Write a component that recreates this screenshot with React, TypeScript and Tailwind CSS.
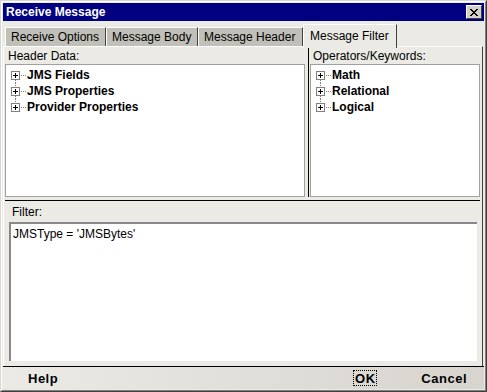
import React from "react";

const F = "font-['Liberation_Sans',Arial,sans-serif]";

function TreeRow({ label, first, last }: { label: string; first: boolean; last: boolean }) {
  return (
    <div className="flex items-center h-[16px]">
      <svg width="16" height="16" viewBox="0 0 16 16" className="shrink-0" shapeRendering="crispEdges">
        {!first && <line x1="4.5" y1="0" x2="4.5" y2="4" stroke="#808080" strokeDasharray="1 1" />}
        {!last && <line x1="4.5" y1="13" x2="4.5" y2="16" stroke="#808080" strokeDasharray="1 1" />}
        <rect x="0.5" y="4.5" width="8" height="8" fill="#fff" stroke="#808080" />
        <line x1="2" y1="8.5" x2="7" y2="8.5" stroke="#000" />
        <line x1="4.5" y1="6" x2="4.5" y2="11" stroke="#000" />
        <line x1="10" y1="8.5" x2="16" y2="8.5" stroke="#808080" strokeDasharray="1 1" />
      </svg>
      <span className="text-[12px] font-bold text-black leading-none whitespace-nowrap">{label}</span>
    </div>
  );
}

function Tree({ items }: { items: string[] }) {
  return (
    <div className="flex flex-col pt-[2px] pl-[5px]">
      {items.map((it, i) => (
        <TreeRow key={it} label={it} first={i === 0} last={i === items.length - 1} />
      ))}
    </div>
  );
}

export default function App() {
  return (
    <div className={`${F} w-[487px] h-[392px] overflow-hidden bg-[#ebeae5] border border-t-[#d8d6d0] border-l-[#d8d6d0] border-r-[#404040] border-b-[#404040] flex flex-col`}>
      <div className="flex-1 flex flex-col border border-t-white border-l-white border-r-[#808080] border-b-[#808080] p-px min-h-0">
        {/* Title bar */}
        <div className="h-[18px] shrink-0 bg-[#000080] flex items-center justify-between pl-[3px] pr-[2px]">
          <span className="text-white font-bold text-[12px] leading-none">Receive Message</span>
          <div className="w-[16px] h-[14px] bg-[#d4d0c8] border border-t-white border-l-white border-r-[#404040] border-b-[#404040] flex items-center justify-center">
            <svg width="8" height="7" viewBox="0 0 8 7" shapeRendering="crispEdges">
              <path d="M0 0h2v1h-2zM6 0h2v1h-2zM1 1h2v1h-2zM5 1h2v1h-2zM2 2h4v1h-4zM3 3h2v1h-2zM2 4h4v1h-4zM1 5h2v1h-2zM5 5h2v1h-2zM0 6h2v1h-2zM6 6h2v1h-2z" fill="#000" />
            </svg>
          </div>
        </div>

        {/* Tabs */}
        <div className="h-[25px] shrink-0 flex items-end pl-[2px] relative z-10">
          <div className="w-[101px] h-[19px] bg-[#c0c0b8] border-t border-l border-r border-t-white border-l-white border-r-[#404040] flex items-center pl-[5px] text-[12px] text-black leading-none whitespace-nowrap">Receive Options</div>
          <div className="w-[92px] h-[19px] bg-[#c0c0b8] border-t border-l border-r border-t-white border-l-white border-r-[#404040] flex items-center pl-[5px] text-[12px] text-black leading-none whitespace-nowrap">Message Body</div>
          <div className="w-[105px] h-[19px] bg-[#c0c0b8] border-t border-l border-r border-t-white border-l-white border-r-[#404040] flex items-center pl-[5px] text-[12px] text-black leading-none whitespace-nowrap">Message Header</div>
          <div className="w-[94px] h-[24px] mb-[-2px] bg-[#ebeae5] border-t border-l border-r border-t-white border-l-white border-r-[#404040] flex items-start pt-[5px] pl-[6px] text-[12px] text-black leading-none whitespace-nowrap">Message Filter</div>
        </div>

        {/* Content panel */}
        <div className="flex-1 min-h-0 flex flex-col border-t border-l border-r border-t-white border-l-white border-r-[#404040] mr-px">
          {/* top split */}
          <div className="h-[153px] shrink-0 flex">
            <div className="w-[300px] ml-px flex flex-col mb-[3px]">
              <div className="h-[17px] shrink-0 flex items-center pl-[3px] text-[12px] text-black leading-none">Header Data:</div>
              <div className="flex-1 bg-white border border-[#a0a0a0]">
                <Tree items={["JMS Fields", "JMS Properties", "Provider Properties"]} />
              </div>
            </div>
            <div className="w-[3px] shrink-0" />
            <div className="w-[172px] flex flex-col border-l border-l-black mb-[3px] mt-px">
              <div className="h-[16px] shrink-0 flex items-center pl-[4px] text-[12px] text-black leading-none">Operators/Keywords:</div>
              <div className="flex-1 ml-px w-[170px] bg-white border border-[#a0a0a0]">
                <Tree items={["Math", "Relational", "Logical"]} />
              </div>
            </div>
          </div>
          <div className="h-px shrink-0 bg-black ml-px mr-[2px]" />
          {/* bottom split */}
          <div className="h-[21px] shrink-0 flex items-center pl-[8px] text-[12px] text-black leading-none">Filter:</div>
          <div className="h-[139px] shrink-0 ml-[5px] w-[468px] bg-white border-t-2 border-l-2 border-t-[#888] border-l-[#888] pt-[3px] pl-[2px] text-[12px] text-black leading-[14px] whitespace-pre">JMSType = 'JMSBytes'</div>
        </div>

        {/* Button bar */}
        <div className="h-[23px] shrink-0 border-t border-t-black bg-linear-to-r from-[#eceae5] to-[#d6d4cd] flex items-center pl-[25px] pr-[17px]">
          <span className="text-[13px] font-bold tracking-[0.5px] text-black leading-none">Help</span>
          <div className="flex-1" />
          <div className="h-[16px] w-[24px] border border-dotted border-black flex items-center justify-center">
            <span className="text-[13px] font-bold tracking-[0.5px] text-black leading-none">OK</span>
          </div>
          <div className="w-[44px]" />
          <span className="text-[13px] font-bold tracking-[0.5px] text-black leading-none">Cancel</span>
        </div>
      </div>
    </div>
  );
}
